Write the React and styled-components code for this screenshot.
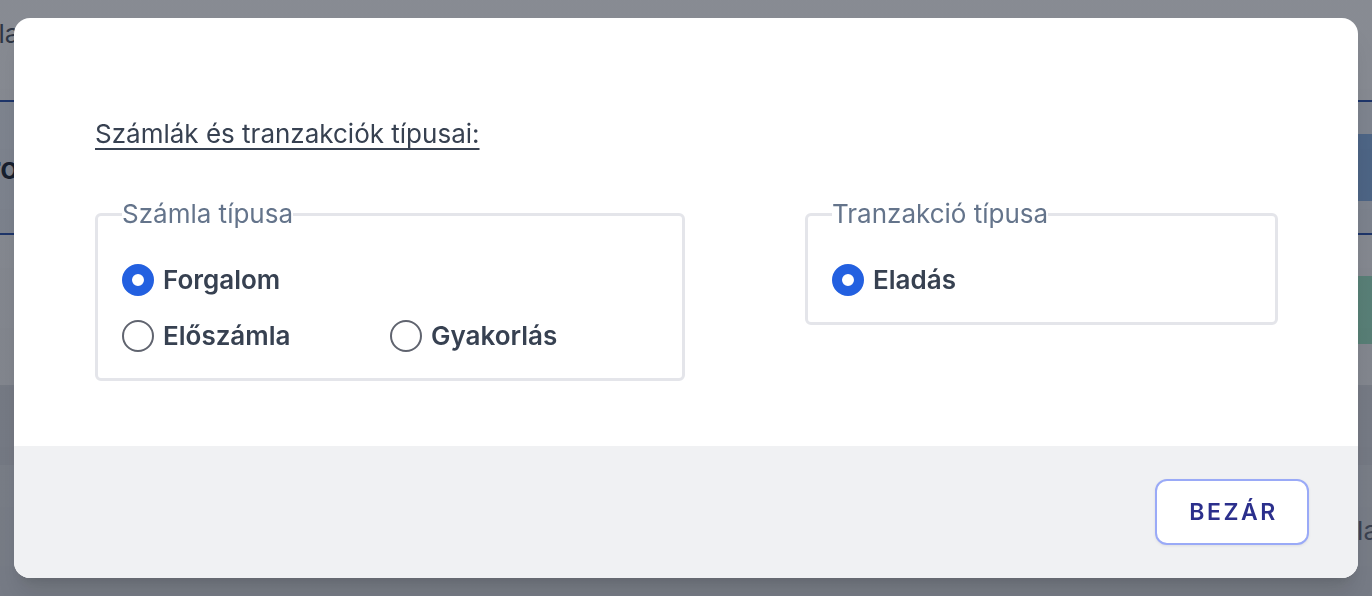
import React, { useState } from 'react'
import styled, { createGlobalStyle } from 'styled-components'

const GlobalStyle = createGlobalStyle`
  html, body {
    margin: 0;
    height: 100%;
    overflow: hidden;
  }
  body {
    font-family: Inter, "Noto Sans", sans-serif;
    background: #fff;
  }
`

// page behind the dialog
const Page = styled.div`
  width: 1540px;
  height: 596px;
  margin-left: -100px;
  display: flex;
  flex-direction: column;
  background: #fff;
`

const Header = styled.div`
  height: 100px;
  box-sizing: border-box;
  padding: 18px 0 0 30px;
  font-size: 26px;
  color: #4b5563;
`

const Band = styled.div`
  height: 135px;
  box-sizing: border-box;
  display: flex;
  align-items: center;
  justify-content: space-between;
  padding: 0 12px 0 33px;
  border-top: 2px solid #2d55b0;
  border-bottom: 2px solid #2d55b0;
  background: #eef2f9;
  font-size: 30px;
  font-weight: 600;
  color: #1f2937;
`

const PageButton = styled.div`
  width: 70px;
  height: ${p => p.$h}px;
  display: flex;
  align-items: center;
  padding-left: 14px;
  box-sizing: border-box;
  background: ${p => p.$bg};
  color: #fff;
  font-size: 26px;
`

const Row = styled.div`
  height: 150px;
  display: flex;
  align-items: center;
  justify-content: flex-end;
  padding-right: 12px;
`

const Lower = styled.div`
  height: 80px;
  background: #e6e7eb;
`

const Bottom = styled.div`
  flex: 1;
  display: flex;
  align-items: center;
  justify-content: flex-end;
  padding: 0 62px 0 0;
  background: #eef0f3;
  font-size: 26px;
  color: #6b7280;
`

// dialog
const Overlay = styled.div`
  position: fixed;
  inset: 0;
  display: flex;
  justify-content: center;
  align-items: flex-start;
  padding-top: 18px;
  background: linear-gradient(rgba(17, 24, 39, 0.5), rgba(17, 24, 39, 0.54));
`

const Modal = styled.div`
  width: 1344px;
  height: 560px;
  display: flex;
  flex-direction: column;
  border-radius: 16px;
  overflow: hidden;
  background: #fff;
  box-shadow: 0 20px 25px -5px rgba(0, 0, 0, 0.1), 0 8px 10px -6px rgba(0, 0, 0, 0.1);
`

const Body = styled.div`
  flex: 1;
  padding: 100px 80px 0 81px;
`

const Title = styled.h3`
  margin: 0 0 50px;
  font-size: 26px;
  font-weight: 400;
  line-height: 32px;
  color: #374151;
  text-decoration: underline;
  text-underline-offset: 5px;
  text-decoration-thickness: 1.5px;
`

const Groups = styled.div`
  display: grid;
  grid-template-columns: 590px 473px;
  column-gap: 120px;
  align-items: start;
`

const Fieldset = styled.fieldset`
  margin: 0;
  min-width: 0;
  padding: 0 24px 26px;
  border: 3px solid #e4e5ea;
  border-radius: 6px;
`

const Legend = styled.legend`
  padding: 0;
  font-size: 26px;
  line-height: 28px;
  color: #64748b;
`

const Options = styled.div`
  display: grid;
  grid-template-columns: 268px auto;
  row-gap: 24px;
  padding-top: 36px;
`

const Option = styled.label`
  display: flex;
  align-items: center;
  gap: 9px;
  grid-column: ${p => (p.$wide ? '1 / -1' : 'auto')};
  font-size: 26px;
  font-weight: 600;
  line-height: 32px;
  color: #374151;
  cursor: pointer;
`

const Radio = styled.input.attrs({ type: 'radio' })`
  appearance: none;
  flex: none;
  margin: 0;
  width: 32px;
  height: 32px;
  box-sizing: border-box;
  border-radius: 50%;
  border: 2px solid #60646f;
  background: #fff;
  cursor: pointer;

  &:checked {
    border: 10px solid #2360e0;
  }
`

const Footer = styled.div`
  height: 132px;
  display: flex;
  align-items: center;
  justify-content: flex-end;
  padding-right: 49px;
  background: #f0f1f3;
`

const CloseButton = styled.button`
  width: 154px;
  height: 66px;
  border: 2px solid #9aaaf7;
  border-radius: 12px;
  background: #fff;
  box-shadow: 0 1px 3px rgba(0, 0, 0, 0.08);
  font-family: Inter, "Noto Sans", sans-serif;
  font-size: 23px;
  font-weight: 600;
  letter-spacing: 2.5px;
  padding: 0 0 0 3px;
  color: #2b2f8c;
  cursor: pointer;
`

const App = () => {
  const [invoiceType, setInvoiceType] = useState('forgalom')
  const [transactionType, setTransactionType] = useState('eladas')

  return (
    <>
      <GlobalStyle />
      <Page>
        <Header>Számla</Header>
        <Band>
          <span>Metro</span>
          <PageButton $h={67} $bg="#8db5e6">V</PageButton>
        </Band>
        <Row>
          <PageButton $h={68} $bg="#a6efcc">▮</PageButton>
        </Row>
        <Lower />
        <Bottom>Számla</Bottom>
      </Page>
      <Overlay>
        <Modal>
          <Body>
            <Title>Számlák és tranzakciók típusai:</Title>
            <Groups>
              <Fieldset>
                <Legend>Számla típusa</Legend>
                <Options>
                  <Option $wide>
                    <Radio
                      name="invoice"
                      checked={invoiceType === 'forgalom'}
                      onChange={() => setInvoiceType('forgalom')}
                    />
                    Forgalom
                  </Option>
                  <Option>
                    <Radio
                      name="invoice"
                      checked={invoiceType === 'eloszamla'}
                      onChange={() => setInvoiceType('eloszamla')}
                    />
                    Előszámla
                  </Option>
                  <Option>
                    <Radio
                      name="invoice"
                      checked={invoiceType === 'gyakorlas'}
                      onChange={() => setInvoiceType('gyakorlas')}
                    />
                    Gyakorlás
                  </Option>
                </Options>
              </Fieldset>
              <Fieldset>
                <Legend>Tranzakció típusa</Legend>
                <Options>
                  <Option $wide>
                    <Radio
                      name="transaction"
                      checked={transactionType === 'eladas'}
                      onChange={() => setTransactionType('eladas')}
                    />
                    Eladás
                  </Option>
                </Options>
              </Fieldset>
            </Groups>
          </Body>
          <Footer>
            <CloseButton>BEZÁR</CloseButton>
          </Footer>
        </Modal>
      </Overlay>
    </>
  )
}

export default App
